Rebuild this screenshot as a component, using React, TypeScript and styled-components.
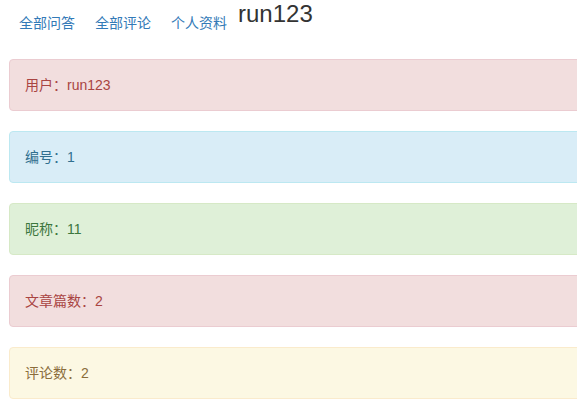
import React from "react";
import styled, { createGlobalStyle } from "styled-components";

const GlobalStyle = createGlobalStyle`
  html, body {
    margin: 0;
    padding: 0;
    background: #fff;
    overflow: hidden;
  }
  body {
    font-family: "Liberation Sans", Arial, "Noto Sans CJK SC", sans-serif;
    font-size: 14px;
    line-height: 1.42857;
    color: #333;
  }
`;

const Page = styled.div`
  width: 640px;
  padding: 0 0 0 9px;
`;

const Header = styled.div`
  display: flex;
  align-items: flex-start;
  height: 59px;
`;

const NavList = styled.ul`
  display: flex;
  list-style: none;
  margin: 0;
  padding: 3px 0 0 0;
`;

const NavLink = styled.a`
  display: block;
  padding: 10px 10px;
  color: #337ab7;
  text-decoration: none;
  font-size: 14px;
  line-height: 20px;
`;

const Title = styled.h3`
  margin: 0;
  padding-top: 1px;
  font-size: 24px;
  font-weight: 400;
  line-height: 26px;
  color: #333;
  margin-left: 1px;
`;

type Variant = "danger" | "info" | "success" | "warning";

const palette: Record<Variant, { bg: string; border: string; color: string }> = {
  danger: { bg: "#f2dede", border: "#ebccd1", color: "#a94442" },
  info: { bg: "#d9edf7", border: "#bce8f1", color: "#31708f" },
  success: { bg: "#dff0d8", border: "#d6e9c6", color: "#3c763d" },
  warning: { bg: "#fcf8e3", border: "#faebcc", color: "#8a6d3b" },
};

const Alert = styled.div<{ $variant: Variant }>`
  padding: 15px;
  margin-bottom: 20px;
  border: 1px solid ${(p) => palette[p.$variant].border};
  border-radius: 4px;
  background: ${(p) => palette[p.$variant].bg};
  color: ${(p) => palette[p.$variant].color};
  font-size: 14px;
  line-height: 20px;
`;

const items: { label: string; value: string; variant: Variant }[] = [
  { label: "用户：", value: "run123", variant: "danger" },
  { label: "编号：", value: "1", variant: "info" },
  { label: "昵称：", value: "11", variant: "success" },
  { label: "文章篇数：", value: "2", variant: "danger" },
  { label: "评论数：", value: "2", variant: "warning" },
];

export default function App() {
  return (
    <>
      <GlobalStyle />
      <Page>
        <Header>
          <NavList>
            <li><NavLink href="#">全部问答</NavLink></li>
            <li><NavLink href="#">全部评论</NavLink></li>
            <li><NavLink href="#">个人资料</NavLink></li>
          </NavList>
          <Title>run123</Title>
        </Header>
        {items.map((it, i) => (
          <Alert key={i} $variant={it.variant}>
            {it.label}
            {it.value}
          </Alert>
        ))}
      </Page>
    </>
  );
}
